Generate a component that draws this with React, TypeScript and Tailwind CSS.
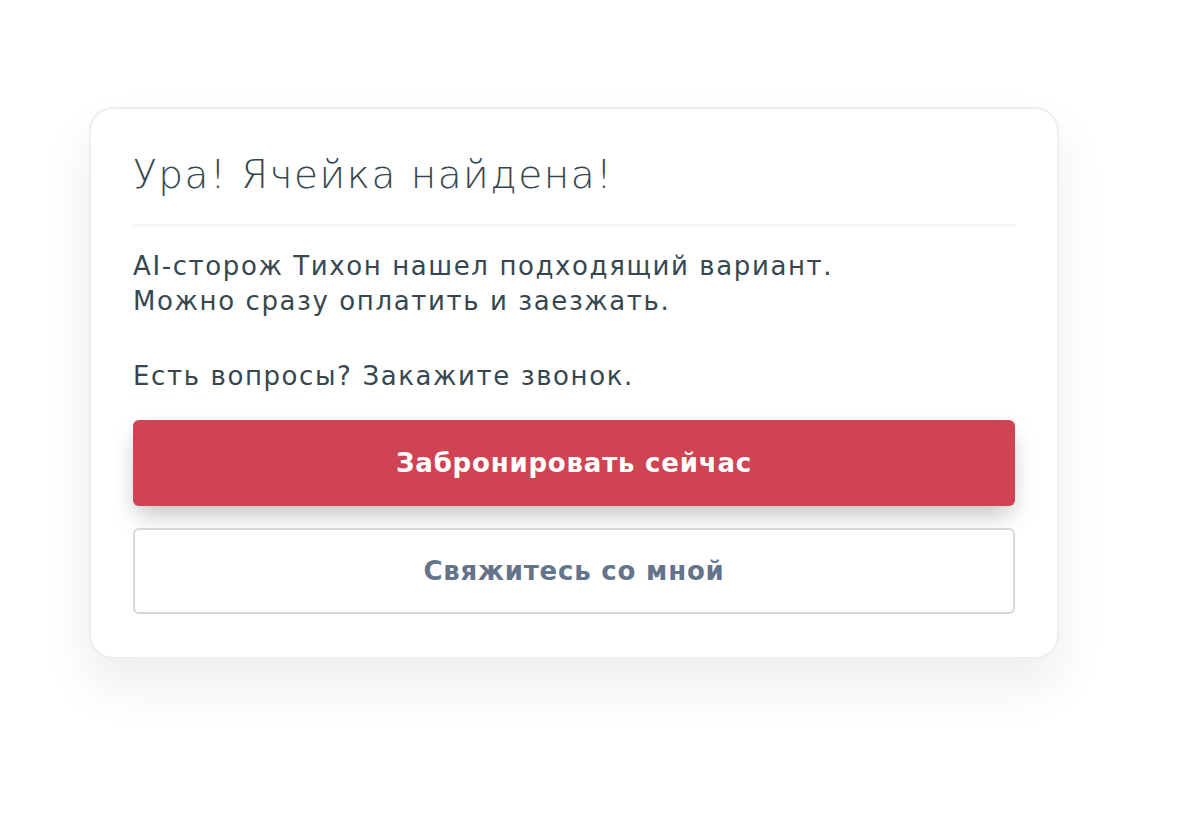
import React from "react";

export default function App() {
  return (
    <div
      className="w-[1198px] h-[814px] bg-white pt-[107px] pl-[89px]"
      style={{ fontFamily: '"DejaVu Sans", "Noto Sans", sans-serif' }}
    >
      <div className="w-[970px] rounded-[24px] border-2 border-[#eceef0] bg-white px-[42px] pt-[41px] pb-[43px] shadow-[0_26px_50px_0_rgba(17,24,39,0.08)]">
        <h1 className="text-[39px] font-light leading-[50px] text-[#37474f] tracking-[1.5px]">
          Ура! Ячейка найдена!
        </h1>
        <div className="mt-[24px] h-[3px] bg-[#f5f5f6]" />
        <div className="mt-[22px] text-[26px] leading-[35px] text-[#37474f] tracking-[1.6px]">
          <p>AI-сторож Тихон нашел подходящий вариант.</p>
          <p>Можно сразу оплатить и заезжать.</p>
          <p className="mt-[40px]">Есть вопросы? Закажите звонок.</p>
        </div>
        <button className="mt-[26px] flex h-[86px] w-full items-center justify-center rounded-[6px] bg-[#cf4353] text-[26px] font-bold tracking-[0.8px] text-white shadow-[0_12px_24px_-4px_rgba(0,0,0,0.25)]">
          Забронировать сейчас
        </button>
        <button className="mt-[22px] flex h-[86px] w-full items-center justify-center rounded-[6px] border-2 border-[#d5d9de] bg-white text-[26px] font-bold tracking-[0.8px] text-[#64748b]">
          Свяжитесь со мной
        </button>
      </div>
    </div>
  );
}
